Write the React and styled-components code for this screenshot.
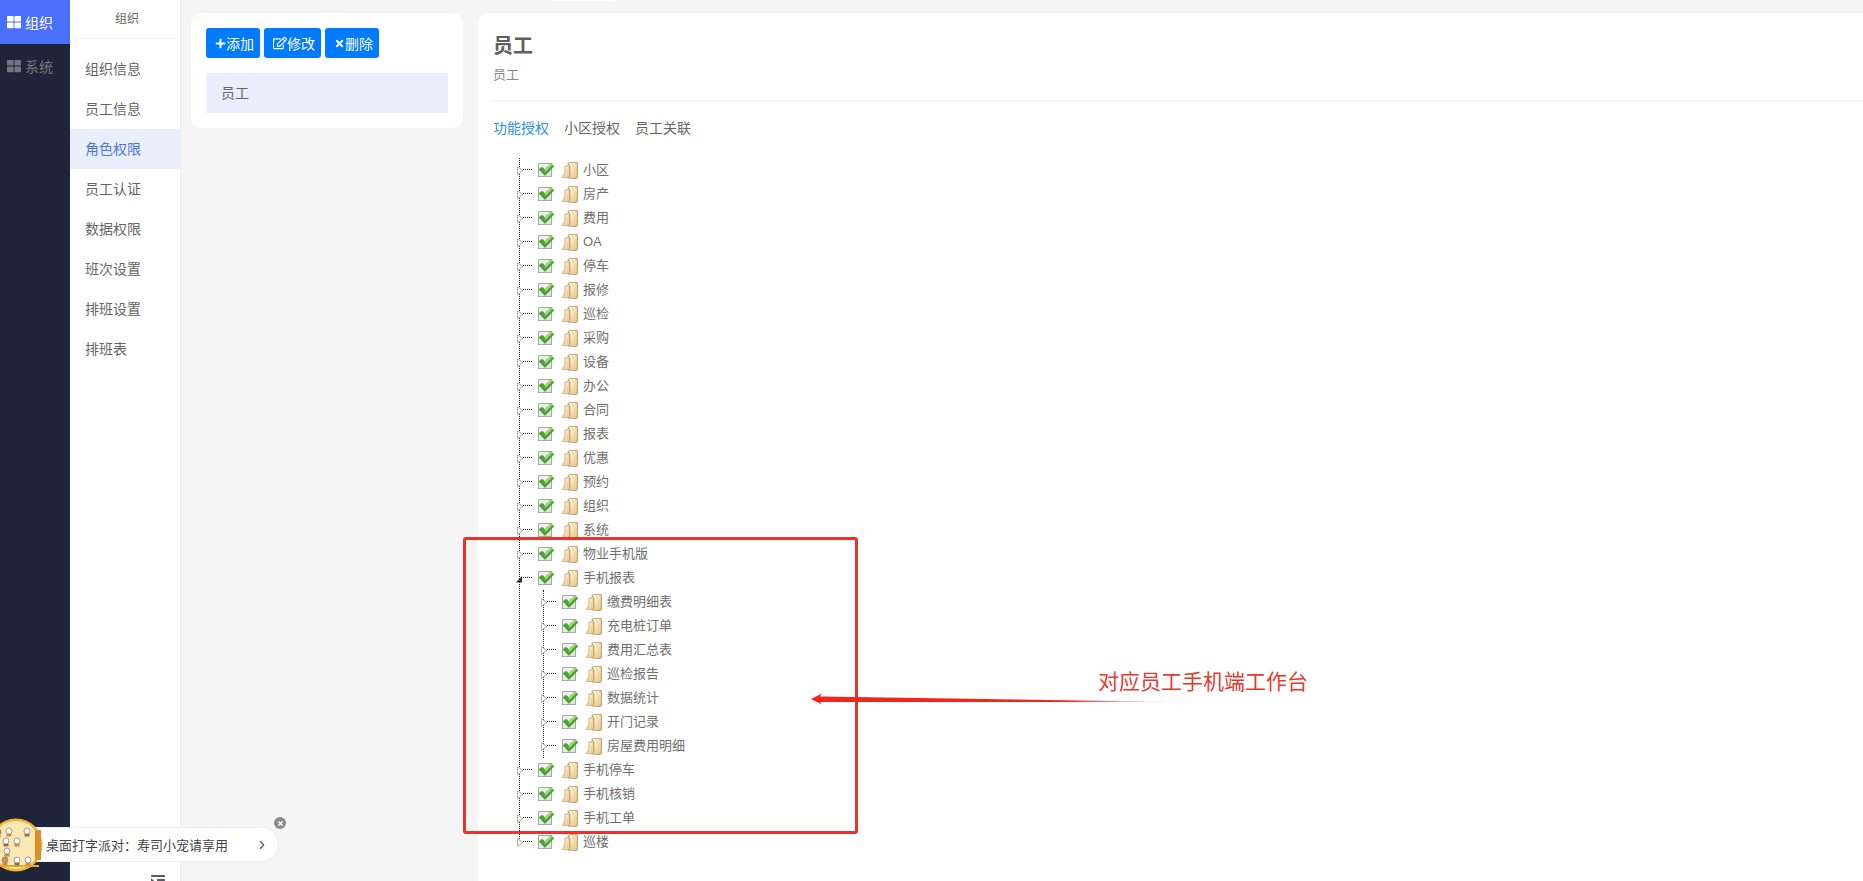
import React from 'react';
import styled, { createGlobalStyle } from 'styled-components';
import { FaThLarge, FaPlus, FaRegEdit, FaTimes, FaIndent } from 'react-icons/fa';
import { FiChevronRight } from 'react-icons/fi';

/* Data ---------------------------*/
const railItems = [
    { label: '组织', active: true },
    { label: '系统' },
];

const menuItems = ['组织信息', '员工信息', '角色权限', '员工认证', '数据权限', '班次设置', '排班设置', '排班表'];

const tabs = ['功能授权', '小区授权', '员工关联'];

const treeBefore = ['小区', '房产', '费用', 'OA', '停车', '报修', '巡检', '采购', '设备', '办公', '合同', '报表', '优惠', '预约', '组织', '系统', '物业手机版'];
const treeChildren = ['缴费明细表', '充电桩订单', '费用汇总表', '巡检报告', '数据统计', '开门记录', '房屋费用明细'];
const treeAfter = ['手机停车', '手机核销', '手机工单', '巡楼'];

const catSpots = [
    [5, 11], [16, 10], [34, 10], [3, 20], [13, 20], [24, 20], [4, 30], [14, 30], [2, 39], [12, 39], [24, 39], [35, 39],
];

/* Small drawings ---------------------------*/
const Expander = ({ open }) => (
    <ExpanderIcon viewBox="0 0 6 9" $open={ open }>
        { open
            ? <path d="M0 8.5 L6 8.5 L6 2 Z" fill="#333" />
            : <path d="M.5 .5 L5.5 4.5 L.5 8.5 Z" fill="#fff" stroke="#aaa" strokeWidth="1" />
        }
    </ExpanderIcon>
);

const Check = () => (
    <CheckBox>
        <svg viewBox="0 0 17 14" width="17" height="14">
            <path d="M1 6.5 L4 4 L6.8 6.8 L13 .8 L16 3.2 L6.9 12.6 Z" fill="#46a52f" stroke="#3a9126" strokeWidth=".5" />
            <path d="M6.8 6.8 L13 .8 L14.6 2 L6.9 9.2 Z" fill="#93e06c" />
        </svg>
    </CheckBox>
);

const Folder = () => (
    <FolderIcon viewBox="0 0 16 17">
        <defs>
            <linearGradient id="leaf" x1="0" y1="0" x2="1" y2="1">
                <stop offset="0" stopColor="#fff8e2" />
                <stop offset="1" stopColor="#e6c585" />
            </linearGradient>
        </defs>
        <path d="M.5 15.5 L3 10 L3 4 L7 4 L9 15.5 Z" fill="url(#leaf)" stroke="#c9a96a" strokeWidth=".8" />
        <path d="M5.5 2 L7.5 .6 L15.4 .6 L15.4 15.6 L14 16.5 L6 16 L8 14 L7.5 3 Z" fill="url(#leaf)" stroke="#b8945a" strokeWidth=".9" />
    </FolderIcon>
);

const TreeRow = ({ label, open }) => (
    <Row>
        <Expander open={ open } />
        <Connector />
        <Check />
        <Folder />
        <RowLabel>{ label }</RowLabel>
    </Row>
);

const AdPicture = () => (
    <AdArt viewBox="0 0 54 54">
        <circle cx="27" cy="27" r="26.5" fill="#f2b632" />
        <circle cx="27" cy="27" r="24" fill="#fbe9b4" />
        <rect x="4" y="47" width="46" height="2" fill="#e8a92b" />
        <rect x="46" y="12" width="6" height="30" fill="#d9902c" />
        { catSpots.map(([x, y], i) => (
            <g key={ i }>
                <circle cx={ x + 4 } cy={ y + 3 } r="3" fill={ i % 3 === 0 ? '#d8924a' : '#fff' } stroke="#8a7060" strokeWidth=".7" />
                <rect x={ x + 1.5 } y={ y + 6 } width="5" height="2.5" fill={ i % 2 === 0 ? '#8a7060' : '#c98a55' } />
            </g>
        )) }
    </AdArt>
);

/* App ---------------------------*/
const App = () => {
    return (
        <Page>
            <GlobalStyle />
            <Rail>
                { railItems.map((item) => (
                    <RailItem key={ item.label } $active={ item.active }>
                        <FaThLarge size={ 14 } />
                        { item.label }
                    </RailItem>
                )) }
            </Rail>

            <SideMenu>
                <MenuHeader>组织</MenuHeader>
                <MenuList>
                    { menuItems.map((item) => (
                        <MenuItem key={ item } $active={ item === '角色权限' }>{ item }</MenuItem>
                    )) }
                </MenuList>
            </SideMenu>

            <Content>
                <RoleCard>
                    <ButtonRow>
                        <ActionButton><FaPlus size={ 11 } />添加</ActionButton>
                        <ActionButton><FaRegEdit size={ 14 } />修改</ActionButton>
                        <ActionButton><FaTimes size={ 11 } />删除</ActionButton>
                    </ButtonRow>
                    <RoleRow>员工</RoleRow>
                </RoleCard>

                <MainCard>
                    <Title>员工</Title>
                    <SubTitle>员工</SubTitle>
                    <Divider />
                    <Tabs>
                        { tabs.map((tab, i) => (
                            <Tab key={ tab } $active={ i === 0 }>{ tab }</Tab>
                        )) }
                    </Tabs>
                    <Tree>
                        { treeBefore.map((label) => <TreeRow key={ label } label={ label } />) }
                        <TreeRow label="手机报表" open />
                        <SubTree>
                            { treeChildren.map((label) => <TreeRow key={ label } label={ label } />) }
                        </SubTree>
                        { treeAfter.map((label) => <TreeRow key={ label } label={ label } />) }
                    </Tree>
                </MainCard>
            </Content>

            <TopSliver />
            <FooterIcon><FaIndent size={ 16 } /></FooterIcon>

            {/* red notes drawn over the screenshot */}
            <NoteBox />
            <NoteText>对应员工手机端工作台</NoteText>
            <NoteArrow viewBox="0 0 370 14" width="370" height="14">
                <defs>
                    <linearGradient id="fade" x1="0" y1="0" x2="1" y2="0">
                        <stop offset="0" stopColor="#f5251c" />
                        <stop offset=".7" stopColor="#f5251c" />
                        <stop offset="1" stopColor="#f5251c" stopOpacity="0" />
                    </linearGradient>
                </defs>
                <path d="M0 7 L11 1.5 L9 4.5 L366 10 L9 10 L11 12.5 Z" fill="url(#fade)" />
            </NoteArrow>

            <AdWidget>
                <AdPicture />
                <AdPill>
                    <AdText>桌面打字派对：寿司小宠请享用</AdText>
                    <FiChevronRight size={ 14 } color="#555" />
                </AdPill>
                <AdClose><FaTimes size={ 7 } /></AdClose>
            </AdWidget>
        </Page>
    );
}

export default App;

/* Styles ---------------------------*/
const GlobalStyle = createGlobalStyle`
    html, body {
        margin: 0;
        padding: 0;
        height: 100%;
        overflow: hidden;
    }
    body {
        font-family: "Liberation Sans", "Noto Sans CJK SC", sans-serif;
        font-size: 14px;
        color: #666;
    }
`;

const Page = styled.div`
    position: relative;
    display: flex;
    height: 881px;
    overflow: hidden;
    background: #f5f5f5;
`;

const Rail = styled.div`
    flex: 0 0 70px;
    background: #1f2439;
`;

const RailItem = styled.div`
    display: flex;
    align-items: center;
    gap: 4px;
    height: 44px;
    padding-left: 7px;
    font-size: 14px;
    color: ${ ({ $active }) => $active ? '#fff' : '#75777f' };
    background: ${ ({ $active }) => $active ? '#4a6ffa' : 'transparent' };
`;

const SideMenu = styled.div`
    flex: 0 0 110px;
    background: #fff;
    border-right: 1px solid #ececec;
`;

const MenuHeader = styled.div`
    height: 38px;
    line-height: 38px;
    padding-left: 45px;
    font-size: 12px;
    color: #666;
    border-bottom: 1px solid #f2f2f2;
`;

const MenuList = styled.div`
    padding-top: 10px;
`;

const MenuItem = styled.div`
    height: 40px;
    line-height: 40px;
    padding-left: 15px;
    font-size: 14px;
    color: ${ ({ $active }) => $active ? '#4d76dc' : '#666' };
    background: ${ ({ $active }) => $active ? '#e9effc' : 'transparent' };
`;

const Content = styled.div`
    flex: 1;
    display: flex;
    align-items: flex-start;
    gap: 15px;
    padding: 13px 0 0 10px;
`;

const RoleCard = styled.div`
    flex: 0 0 272px;
    box-sizing: border-box;
    height: 115px;
    padding: 15px;
    background: #fff;
    border-radius: 10px;
`;

const ButtonRow = styled.div`
    display: flex;
    gap: 4px;
`;

const ActionButton = styled.div`
    display: flex;
    align-items: center;
    height: 30px;
    padding: 0 6px 0 9px;
    font-size: 14px;
    color: #fff;
    background: #007bff;
    border-radius: 3px;
`;

const RoleRow = styled.div`
    height: 40px;
    line-height: 40px;
    margin-top: 15px;
    padding-left: 15px;
    font-size: 14px;
    color: #666;
    background: #e9effc;
`;

const MainCard = styled.div`
    flex: 1;
    box-sizing: border-box;
    height: 868px;
    padding: 20px 0 0 15px;
    background: #fff;
    border-radius: 10px 0 0 0;
`;

const Title = styled.div`
    height: 26px;
    line-height: 26px;
    font-size: 20px;
    font-weight: bold;
    color: #5f5f5f;
`;

const SubTitle = styled.div`
    height: 20px;
    line-height: 20px;
    margin-top: 6px;
    font-size: 13px;
    color: #8a8a8a;
`;

const Divider = styled.div`
    height: 2px;
    margin-top: 15px;
    background: #f5f5f5;
`;

const Tabs = styled.div`
    display: flex;
    gap: 15px;
    margin-top: 16px;
    height: 20px;
    line-height: 20px;
`;

const Tab = styled.div`
    font-size: 14px;
    color: ${ ({ $active }) => $active ? '#2f8fe6' : '#666' };
`;

const Tree = styled.div`
    position: relative;
    margin: 20px 0 0 26px;

    &::before {
        content: '';
        position: absolute;
        left: 0;
        top: 0;
        bottom: 9px;
        border-left: 1px dotted #222;
    }
`;

const SubTree = styled.div`
    margin-left: 24px;
    border-left: 1px dotted #222;

    & > div { margin-left: -1px; }
`;

const Row = styled.div`
    display: flex;
    align-items: center;
    height: 24px;
`;

const ExpanderIcon = styled.svg`
    flex: none;
    position: relative;
    width: 6px;
    height: 9px;
    margin-left: ${ ({ $open }) => $open ? '-3px' : '-2px' };
    margin-right: ${ ({ $open }) => $open ? '1px' : '0' };
`;

const Connector = styled.span`
    flex: none;
    width: 9px;
    border-top: 1px dotted #222;
    margin-top: -1px;
`;

const CheckBox = styled.span`
    flex: none;
    position: relative;
    box-sizing: border-box;
    width: 14px;
    height: 14px;
    margin-left: 6px;
    border: 1px solid #a8a8a8;
    background: linear-gradient(135deg, #f8f8f8, #dedede);

    svg {
        position: absolute;
        left: -1px;
        top: -1px;
    }
`;

const FolderIcon = styled.svg`
    flex: none;
    width: 16px;
    height: 17px;
    margin-left: 10px;
`;

const RowLabel = styled.span`
    margin-left: 5px;
    font-size: 13px;
    line-height: 24px;
    color: #6f6f6f;
    white-space: nowrap;
`;

const TopSliver = styled.div`
    position: absolute;
    left: 550px;
    top: 0;
    width: 65px;
    height: 1px;
    background: #fff;
`;

const FooterIcon = styled.div`
    position: absolute;
    left: 150px;
    top: 874px;
    color: #55596b;
    line-height: 0;
`;

const NoteBox = styled.div`
    position: absolute;
    left: 463px;
    top: 537px;
    width: 395px;
    height: 297px;
    box-sizing: border-box;
    border: 3px solid #f1302a;
    border-radius: 3px;
`;

const NoteText = styled.div`
    position: absolute;
    left: 1098px;
    top: 667px;
    font-size: 21px;
    line-height: 30px;
    color: #e8392e;
    white-space: nowrap;
`;

const NoteArrow = styled.svg`
    position: absolute;
    left: 811px;
    top: 692px;
`;

const AdWidget = styled.div`
    position: absolute;
    left: 0;
    top: 817px;
    width: 290px;
    height: 56px;
`;

const AdArt = styled.svg`
    position: absolute;
    left: -11px;
    top: 1px;
    width: 54px;
    height: 54px;
    z-index: 1;
`;

const AdPill = styled.div`
    position: absolute;
    left: 14px;
    top: 10px;
    box-sizing: border-box;
    width: 265px;
    height: 35px;
    display: flex;
    align-items: center;
    justify-content: space-between;
    padding: 0 9px 0 31px;
    background: #fff;
    border: 1px solid #eee;
    border-radius: 18px;
`;

const AdText = styled.span`
    font-size: 13px;
    color: #444;
    white-space: nowrap;
`;

const AdClose = styled.div`
    position: absolute;
    left: 274px;
    top: 0;
    width: 12px;
    height: 12px;
    display: flex;
    align-items: center;
    justify-content: center;
    color: #fff;
    background: #8c8c8c;
    border-radius: 50%;
`;
